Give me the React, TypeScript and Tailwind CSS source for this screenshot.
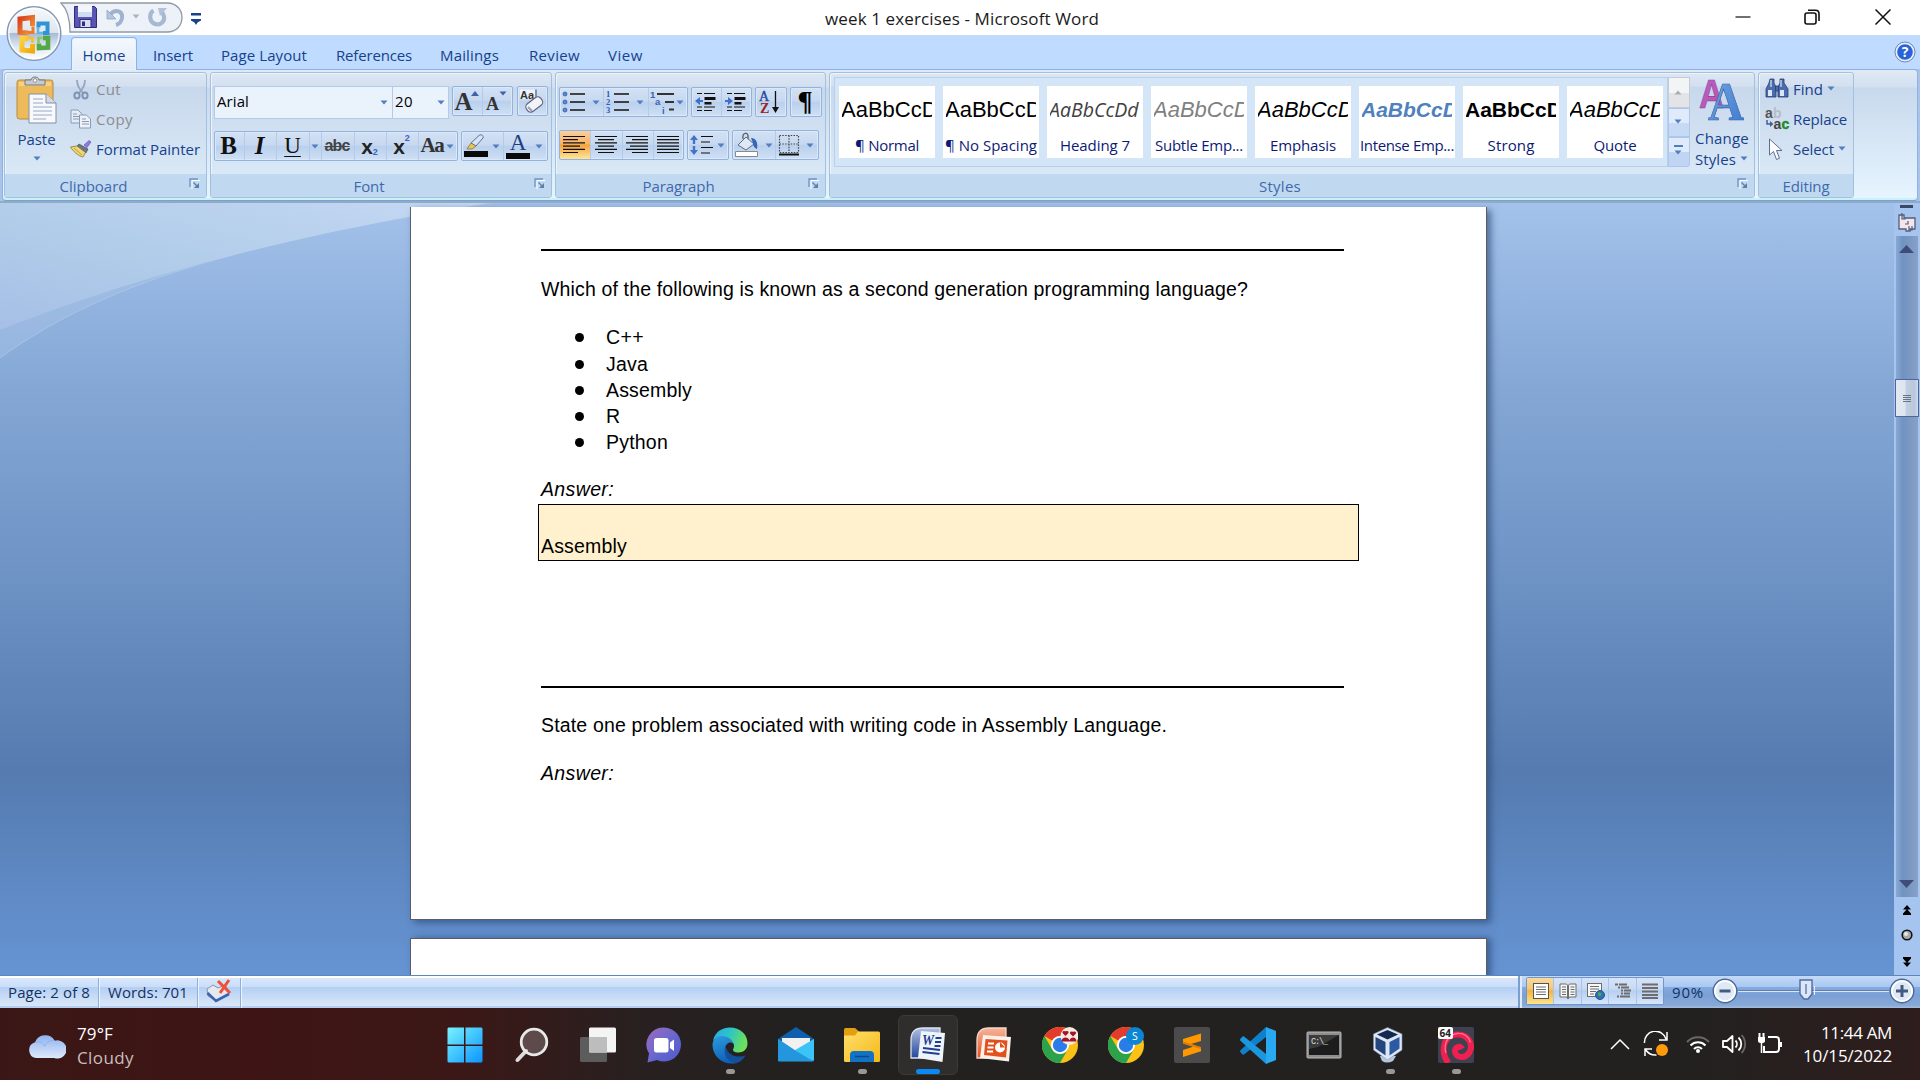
import React, { useLayoutEffect, useRef, useState } from "react";

/** Single-line text tracked so that it fills a given width. */
function Fit({ w, text, className = "" }: { w: number; text: string; className?: string }) {
  const ref = useRef<HTMLSpanElement>(null);
  const [tracking, setTracking] = useState(0);
  useLayoutEffect(() => {
    if (ref.current) setTracking((w - ref.current.getBoundingClientRect().width) / text.length);
  }, []);
  return (
    <span ref={ref} className={"inline-block w-max shrink-0 whitespace-pre " + className} style={{ letterSpacing: tracking }}>
      {text}
    </span>
  );
}

function Caret({ className = "", color = "#4f7fbf" }: { className?: string; color?: string }) {
  return (
    <svg viewBox="0 0 8 5" className={"h-[5px] w-[8px] shrink-0 " + className}>
      <path d="M0.500 0.500h7L4 4.500z" fill={color} />
    </svg>
  );
}

function Launcher() {
  return (
    <svg viewBox="0 0 12 12" className="h-[12px] w-[12px]" fill="none">
      <path d="M2 10V1.500H10" stroke="#fff" strokeWidth="1" transform="translate(1 1)" />
      <path d="M1 9V1h8" stroke="#6f93c4" strokeWidth="1.300" />
      <path d="M4.500 4.500l4 4" stroke="#5b7fae" strokeWidth="1.300" />
      <path d="M10 5v5H5z" fill="#5b7fae" />
    </svg>
  );
}

function Group({ label, labelW, launcher = true, className, children }: { label: string; labelW: number; launcher?: boolean; className: string; children: React.ReactNode }) {
  return (
    <section className={"flex h-[126px] shrink-0 flex-col overflow-hidden rounded-[3px] border border-[#a3c1de] bg-[linear-gradient(180deg,#dde7f3_0px,#d3e0f0_13px,#c8d8ec_14px,#d9e8f6_100px)] shadow-[inset_1px_1px_0_#edf4fb] " + className}>
      <div className="h-[101px] shrink-0">{children}</div>
      <div className="flex h-[23px] items-center bg-[#c1d8f1]">
        <div className={"flex-1 pt-[2px] text-center text-[15px] leading-[23px] text-[#3e6aaa] " + (launcher ? "pr-[7px]" : "")}>
          <Fit w={labelW} text={label} />
        </div>
        {launcher && (
          <div className="-mt-[3px] mr-[5px]">
            <Launcher />
          </div>
        )}
      </div>
    </section>
  );
}

function Cluster({ className, children }: { className: string; children: React.ReactNode }) {
  return (
    <div className={"flex h-[30px] shrink-0 divide-x divide-[#b3cbea] rounded-[2px] border border-[#92b3df] bg-[linear-gradient(180deg,#d3e1f3_0%,#c6d8f0_48%,#b9cfec_50%,#cfe0f5_100%)] shadow-[inset_0_0_0_1px_#dbe8f7] " + className}>
      {children}
    </div>
  );
}

function Cell({ className, children }: { className: string; children: React.ReactNode }) {
  return <div className={"flex h-full shrink-0 items-center justify-center pr-[2px] " + className}>{children}</div>;
}

/* ---------- Title bar icons ---------- */

function OfficeOrb() {
  return (
    <svg viewBox="0 0 56 57" className="h-[57px] w-[56px]">
      <defs>
        <linearGradient id="orb" x1="0" y1="0" x2="0" y2="1">
          <stop offset="0" stopColor="#f6f9fc" />
          <stop offset="0.480" stopColor="#dfe6ef" />
          <stop offset="0.500" stopColor="#a9bcd6" />
          <stop offset="0.750" stopColor="#dfe9f5" />
          <stop offset="1" stopColor="#ffffff" />
        </linearGradient>
        <linearGradient id="orbO" x1="0" y1="0" x2="1" y2="1"><stop offset="0" stopColor="#d8401c" /><stop offset="1" stopColor="#f79a3c" /></linearGradient>
        <linearGradient id="orbY" x1="0" y1="0" x2="1" y2="1"><stop offset="0" stopColor="#fbd23c" /><stop offset="1" stopColor="#f2a90c" /></linearGradient>
      </defs>
      <circle cx="28" cy="28.500" r="26.800" fill="url(#orb)" stroke="#8797b1" strokeWidth="1.400" />
      <circle cx="28" cy="28.500" r="25.200" fill="none" stroke="#fff" strokeOpacity="0.800" strokeWidth="1.400" />
      <g fill="none">
        <path d="M26.500 21v-8.500l-12.500 1.500v13.500l8.500 .5" stroke="url(#orbO)" strokeWidth="5" />
        <path d="M22 27.500h5v-6" stroke="#ef7a2a" strokeWidth="3" />
        <path d="M32.500 22.500v-4h9v9.500h-4.500" stroke="#2f93d6" strokeWidth="4" />
        <path d="M32 22v6h5" stroke="#62b5e8" strokeWidth="2.600" />
        <path d="M22 33.500h-6v11.500l10.500 1v-7" stroke="url(#orbY)" strokeWidth="5" />
        <path d="M22 33h4.500v5" stroke="#f7bd2b" strokeWidth="2.600" />
        <path d="M33 38.500v4.500l9-.5v-9.500h-5" stroke="#54a944" strokeWidth="4.600" />
        <path d="M32.500 38v-5h4" stroke="#8cc95c" strokeWidth="2.600" />
      </g>
    </svg>
  );
}

function QuickAccess() {
  return (
    <div className="relative -ml-[2px] h-[31px] w-[124px]">
      <svg viewBox="0 0 124 31" className="absolute inset-0 h-full w-full" fill="none">
        <path d="M1 1H107C127 1 127 30 107 30H10C10 18 8 8 1 1Z" fill="#edf2f8" stroke="#9199a5" strokeWidth="1.300" />
      </svg>
      <div className="relative flex h-full items-center pb-[2px] pl-[14px]">
        <svg viewBox="0 0 23 23" className="h-[23px] w-[23px]">
          <path d="M.500 1.500h20l2 2v19H.500z" fill="#5a55b4" stroke="#2f2c7c" />
          <path d="M4 1h14v11H4z" fill="#f3f7fd" />
          <path d="M4 7h14v5H4z" fill="#cfdcf2" />
          <path d="M6 14.500h11v8H6z" fill="#d9def0" stroke="#2f2c7c" />
          <path d="M8 16.500h3v4.500H8z" fill="#302c80" />
        </svg>
        <svg viewBox="0 0 20 20" className="ml-[9px] h-[20px] w-[20px]" fill="none">
          <path d="M4 8C8 2 17 3 16 11c-.5 3-3 6-6 7" stroke="#9fb3d0" strokeWidth="4" />
          <path d="M1 3v9h9z" fill="#b4c5dd" stroke="#8fa6c8" strokeWidth=".8" />
        </svg>
        <Caret className="ml-[6px]" color="#b0b4ba" />
        <svg viewBox="0 0 20 20" className="ml-[8px] h-[20px] w-[20px]" fill="none">
          <path d="M5.500 3.500C1 6 1 14 6 16.500c5 2.500 11-1 10-7-.3-2-1-3-2-4" stroke="#a6b9d3" strokeWidth="4.200" />
          <path d="M10 1h9l-7 8z" fill="#b0c1da" />
        </svg>
      </div>
    </div>
  );
}

/* ---------- Ribbon icons ---------- */

const PasteIcon = () => (
  <svg viewBox="0 0 42 48" className="h-[48px] w-[42px]">
    <rect x="1" y="4" width="36" height="39" rx="2.500" fill="#eebb5c" stroke="#b58a3c" />
    <rect x="3" y="6" width="32" height="4" fill="#f6d084" />
    <path d="M9 4h6c0-4 8-4 8 0h6v5H9z" fill="#c6cbd2" stroke="#75797f" />
    <circle cx="19" cy="4.500" r="1.800" fill="#fff" stroke="#666" strokeWidth=".6" />
    <path d="M13 18h17l10 9v20H13z" fill="#f7f9fc" stroke="#8390a6" />
    <path d="M30 18v9h10" fill="#d3dae6" stroke="#8390a6" />
    <path d="M17 23h10M17 27h10M17 31h19M17 35h19M17 39h19M17 43h13" stroke="#b9c4d6" strokeWidth="1.500" />
  </svg>
);
const CutIcon = () => (
  <svg viewBox="0 0 16 21" className="h-[21px] w-[16px]" fill="none">
    <path d="M4 1c0 5 2 9 6 13M12 1c0 5-2 9-6 13" stroke="#96a6bf" strokeWidth="1.800" />
    <ellipse cx="4" cy="16.500" rx="2.600" ry="3" stroke="#7f93b4" strokeWidth="2" />
    <ellipse cx="12" cy="16.500" rx="2.600" ry="3" stroke="#7f93b4" strokeWidth="2" />
  </svg>
);
const CopyIcon = () => (
  <svg viewBox="0 0 22 20" className="h-[20px] w-[22px]" stroke="#8a9ab5">
    <path d="M1 1h7l4 4v9H1z" fill="#e6ecf5" />
    <path d="M3 5h4M3 7.500h7M3 10h7" />
    <path d="M9.500 6h7l4 4v9h-11z" fill="#eef2f8" />
    <path d="M12 10h4M12 12.500h7M12 15h7" />
  </svg>
);
const PainterIcon = () => (
  <svg viewBox="0 0 22 18" className="h-[18px] w-[22px]">
    <path d="M14 5l5-4.500 2 1.500-4 5.500z" fill="#8e7ae0" stroke="#5a4db0" strokeWidth=".6" />
    <path d="M9 4l9 5-2 4-9-7z" fill="#6b7686" stroke="#39414f" strokeWidth=".6" />
    <path d="M7 6l8.500 6.500L13 17C8 16 3 11 .500 7z" fill="#edd778" stroke="#8c7630" strokeWidth=".8" />
    <path d="M4 8l8 7" stroke="#b99c43" />
  </svg>
);
const EraserIcon = () => (
  <svg viewBox="0 0 26 26" className="h-[26px] w-[26px]">
    <path d="M1 1.500h15V11H1z" fill="#eef2fa" />
    <text x="1" y="10.500" fontSize="11" fontWeight="700" fontFamily="Liberation Sans" fill="#333">Aa</text>
    <path d="M17 1.500v10" stroke="#444" />
    <rect x="6.500" y="12" width="18" height="9.500" rx="4" transform="rotate(-38 15 17)" fill="#f2f3f8" stroke="#5f6780" strokeWidth="1.200" />
    <path d="M9 19l4 4" stroke="#9aa2bb" strokeWidth="2" />
  </svg>
);

const Lines = ({ rows }: { rows: [number, number][] }) => (
  <svg viewBox="0 0 24 20" className="h-[20px] w-[24px]" stroke="#111" strokeWidth="1.200">
    {rows.map(([a, b], i) => <path key={i} d={`M${a} ${1.500 + i * 3.200}H${b}`} />)}
  </svg>
);

const ListIcon = ({ numbered = false }: { numbered?: boolean }) => (
  <svg viewBox="0 0 24 24" className="h-[24px] w-[24px]">
    {[4, 12, 20].map((y, i) => (
      <g key={y}>
        {numbered ? (
          <text x="0" y={y + 3} fontSize="8.500" fontWeight="700" fontFamily="Liberation Serif" fill="#2f58b8">{i + 1}</text>
        ) : (
          <circle cx="3" cy={y} r="2" fill="#5b87d6" stroke="#2a55a8" strokeWidth=".7" />
        )}
        <path d={`M8 ${y}h15`} stroke="#111" strokeWidth="1.300" />
      </g>
    ))}
  </svg>
);

const MultiIcon = () => (
  <svg viewBox="0 0 26 26" className="h-[26px] w-[26px]" fontFamily="Liberation Sans" fontWeight="700" fontSize="9.500">
    <text x="0" y="9" fill="#3d62b3">1</text>
    <text x="5" y="16" fill="#3d62b3">a</text>
    <text x="12" y="25" fill="#3d62b3">i</text>
    <path d="M7 5h17M15 13h9M19 20.500h5" stroke="#333" strokeWidth="2" />
  </svg>
);

const IndentIcon = ({ flip = false }: { flip?: boolean }) => (
  <svg viewBox="0 0 22 20" className="h-[20px] w-[22px]">
    <path d="M2 1.500h5M9 1.500h11M2 15h5M9 15h11M2 18.500h5M9 18.500h8" stroke="#111" strokeWidth="1.200" />
    <path d="M9.500 5h11v3h-11zM9.500 10h7v2.500h-7z" fill="#111" />
    {flip ? <path d="M0 8h3V5l5 4-5 4v-3H0z" fill="#3f6fd0" /> : <path d="M8 8H5V5L0 9l5 4v-3h3z" fill="#3f6fd0" />}
  </svg>
);

const SortIcon = () => (
  <svg viewBox="0 0 22 26" className="h-[26px] w-[22px]" fontFamily="Liberation Serif" fontWeight="700">
    <text x="0" y="11.500" fontSize="14" fontWeight="400" fill="#2a4aa0" stroke="#2a4aa0" strokeWidth=".4">A</text>
    <text x="1" y="24" fontSize="14" fill="#9c2222">Z</text>
    <path d="M16.500 2v20" stroke="#111" strokeWidth="1.300" />
    <path d="M13 18h7l-3.500 6z" fill="#111" />
  </svg>
);

const SpacingIcon = () => (
  <svg viewBox="0 0 24 22" className="h-[22px] w-[24px]">
    <path d="M11 2.500h12M11 8h9M11 13.500h12M11 19h9" stroke="#111" strokeWidth="1.200" />
    <path d="M4 1l4 5H5.200v4H2.800V6H0zM4 21l4-5H5.200v-4H2.800v4H0z" fill="#4273c4" />
  </svg>
);

const BucketIcon = () => (
  <svg viewBox="0 0 26 26" className="h-[26px] w-[26px]">
    <path d="M9 7C8 0 14 0 14 4v7" fill="none" stroke="#666" strokeWidth="1.400" />
    <path d="M4 13l8-8 8 7-8 6z" fill="#dfe8f4" stroke="#5a6b88" />
    <path d="M17 6c6 0 7 6 6 11-3-1-4-4-4-6z" fill="#3566b8" />
    <path d="M1.500 19.500h22v5h-22z" fill="#fff" stroke="#8a8a8a" />
  </svg>
);

const BorderIcon = () => (
  <svg viewBox="0 0 22 22" className="h-[22px] w-[22px]" fill="none">
    <path d="M1.500 1.500h19v17h-19zM11 1.500v17M1.500 10h19" stroke="#444" strokeDasharray="1.500 1.300" strokeWidth="1.200" />
    <path d="M1 20.500h20" stroke="#111" strokeWidth="2" />
  </svg>
);

const PenIcon = () => (
  <svg viewBox="0 0 24 24" className="h-[24px] w-[24px]">
    <path d="M7 9L15 1.500c2-1.500 5 0 4 2.500l-7 8z" fill="#d8e4f5" stroke="#5c7099" />
    <path d="M7 9l5 3-4 3H3z" fill="#e6c65a" stroke="#7b6a32" strokeWidth=".7" />
    <path d="M0 17h24v6H0z" fill="#0a0a0a" />
  </svg>
);

const ChangeStylesIcon = () => (
  <svg viewBox="0 0 46 44" className="h-[44px] w-[46px]">
    <defs>
      <linearGradient id="csA" x1="0" y1="0" x2="1" y2="1"><stop offset="0" stopColor="#b565d0" /><stop offset="1" stopColor="#c04c9c" /></linearGradient>
      <linearGradient id="csB" x1="0" y1="0" x2="1" y2="1"><stop offset="0" stopColor="#78a8e0" /><stop offset="1" stopColor="#3d78d0" /></linearGradient>
    </defs>
    <text x="0" y="31" fontSize="40" fontFamily="Liberation Sans" fontWeight="700" fill="url(#csA)" stroke="#83419b" strokeWidth=".6" textLength="25" lengthAdjust="spacingAndGlyphs">A</text>
    <text x="9" y="43" fontSize="54" fontFamily="Liberation Serif" fontWeight="700" fill="url(#csB)" stroke="#3b66a8" strokeWidth=".7" textLength="36" lengthAdjust="spacingAndGlyphs">A</text>
  </svg>
);

const FindIcon = () => (
  <svg viewBox="0 0 24 20" className="h-[20px] w-[24px]">
    <g fill="#4a6cae" stroke="#263d6f" strokeWidth=".8">
      <path d="M5 1h4v4l2 4v10H1v-8l3-6z" />
      <path d="M15 1h4v4l4 6v8H13V9l2-4z" />
      <path d="M10.500 8h3v5h-3z" />
    </g>
    <path d="M3 12h4v6H3zM15 12h4v6h-4z" fill="#dbe6f8" />
    <path d="M6 2v7M16 2v7" stroke="#dbe6f8" strokeWidth="1.200" />
  </svg>
);

const ReplaceIcon = () => (
  <svg viewBox="0 0 26 24" className="h-[24px] w-[26px]" fontFamily="Liberation Sans" fontWeight="700" fontSize="14">
    <text x="0" y="11" fill="#555">a</text>
    <text x="8" y="11" fill="#b8bcc4">b</text>
    <text x="8.500" y="22" fill="#444">a</text>
    <text x="16.500" y="22" fill="#1f8e28" stroke="#1f8e28" strokeWidth=".5">c</text>
    <path d="M2 13v4h4" fill="none" stroke="#3f5f9e" strokeWidth="1.500" />
    <path d="M5 14l3.500 3L5 20z" fill="#3f5f9e" />
  </svg>
);

const SelectIcon = () => (
  <svg viewBox="0 0 16 23" className="h-[23px] w-[16px]">
    <path d="M1.500 1v16l4-3.500 3 8 3-1.200-3-7.800h5.500z" fill="#fdfdff" stroke="#5f6f8f" />
  </svg>
);

/* ---------- Ribbon ---------- */

const styleItems: { name: string; w: number; cls: string }[] = [
  { name: "¶ Normal", w: 64, cls: "text-black" },
  { name: "¶ No Spacing", w: 92, cls: "text-black" },
  { name: "Heading 7", w: 70, cls: "italic text-[#404040] font-['Open_Sans'] text-[19.5px]" },
  { name: "Subtle Emp...", w: 88, cls: "italic text-[#808080]" },
  { name: "Emphasis", w: 66, cls: "italic text-black" },
  { name: "Intense Emp...", w: 94, cls: "italic font-bold text-[#4f81bd] text-[21px]" },
  { name: "Strong", w: 47, cls: "font-bold text-black text-[21px]" },
  { name: "Quote", w: 43, cls: "italic text-black" },
];

function Ribbon() {
  return (
    <div className="h-[134px] shrink-0 bg-[#a9c4e8]">
      <div className="mx-[2px] flex h-[132px] gap-[3px] rounded-[4px] border border-[#8db2e3] border-b-[#7ba3c9] bg-[linear-gradient(180deg,#e0eaf5_0px,#d3e0f0_17px,#c8d9ed_18px,#e6f5ff_129px)] pt-[2px] pl-[1px] shadow-[inset_0_-2px_0_#c9f1f8]">
        <Group label="Clipboard" labelW={68} className="w-[203px]">
          <div className="flex h-full">
            <div className="flex w-[62px] flex-col items-center pt-[3px] pl-[1px] text-[15px] text-[#15428b]">
              <PasteIcon />
              <Fit w={38} text="Paste" className="mt-[5px] leading-[20px]" />
              <Caret className="mt-[7px]" />
            </div>
            <div className="flex flex-col pt-[1px] pl-[2px] text-[15px] leading-[30px] text-[#8d8d8d]">
              <div className="flex h-[30px] items-center"><span className="flex w-[27px] justify-center pr-[4px]"><CutIcon /></span><Fit w={25} text="Cut" /></div>
              <div className="flex h-[30px] items-center"><span className="flex w-[27px] justify-center pr-[4px]"><CopyIcon /></span><Fit w={37} text="Copy" /></div>
              <div className="flex h-[30px] items-center text-[#15428b]"><span className="flex w-[27px] justify-center pr-[3px]"><PainterIcon /></span><Fit w={104} text="Format Painter" /></div>
            </div>
          </div>
        </Group>

        <Group label="Font" labelW={31} className="w-[342px]">
          <div className="flex pt-[13px] pl-[3px]">
            <div className="flex h-[33px] w-[179px] items-center justify-between border border-[#b3cbea] bg-[#eaf2fb] pr-[4px] pb-[2px] pl-[2px] text-[15px] text-black">
              <Fit w={32} text="Arial" /><Caret className="mt-[2px]" />
            </div>
            <div className="flex h-[33px] w-[56px] items-center justify-between border border-l-0 border-[#b3cbea] bg-[#eaf2fb] pr-[3px] pb-[2px] pl-[2px] text-[15px] text-black">
              <Fit w={18} text="20" /><Caret className="mt-[2px]" />
            </div>
            <Cluster className="ml-[3px] w-[61px] font-['Liberation_Serif'] font-bold text-[#333]">
              <Cell className="w-[30px]"><span className="text-[25px] leading-none">A</span><svg viewBox="0 0 8 5" className="-ml-[2px] mb-[16px] h-[5px] w-[8px]"><path d="M0 5h8L4 0z" fill="#3c63a8" /></svg></Cell>
              <Cell className="w-[29px]"><span className="mt-[5px] text-[18px] leading-none">A</span><Caret className="mb-[15px]" color="#3c63a8" /></Cell>
            </Cluster>
            <Cluster className="ml-[4px] w-[31px]"><Cell className="w-[29px]"><EraserIcon /></Cell></Cluster>
          </div>
          <div className="flex pt-[12px] pl-[3px] font-['Liberation_Serif'] text-[#111]">
            <Cluster className="w-[244px]">
              <Cell className="w-[30px] text-[25px] font-bold">B</Cell>
              <Cell className="w-[32px] text-[25px] font-bold italic">I</Cell>
              <Cell className="w-[33px] pl-[1px] text-[23px] underline decoration-1 underline-offset-[3px]">U</Cell>
              <Cell className="w-[12px]"><Caret /></Cell>
              <Cell className="w-[33px] font-['Liberation_Sans'] text-[16px] font-bold text-[#444] line-through"><Fit w={25} text="abc" /></Cell>
              <Cell className="w-[32px] font-['Liberation_Sans'] text-[21px] font-bold text-[#222]"><span className="leading-none">x</span><span className="mt-[14px] text-[9px] text-[#3d62c0]">2</span></Cell>
              <Cell className="w-[32px] font-['Liberation_Sans'] text-[21px] font-bold text-[#222]"><span className="leading-none">x</span><span className="mb-[14px] text-[9px] text-[#3d62c0]">2</span></Cell>
              <Cell className="w-[38px] gap-[2px] text-[21px] font-bold text-[#333]"><Fit w={23} text="Aa" /><Caret /></Cell>
            </Cluster>
            <Cluster className="ml-[3px] w-[87px]">
              <Cell className="w-[42px] gap-[4px]"><PenIcon /><Caret /></Cell>
              <Cell className="w-[43px] gap-[5px]">
                <span className="flex flex-col items-center"><span className="h-[19px] text-[23px] leading-[18px] text-[#1c3f86]">A</span><span className="h-[6px] w-[24px] bg-[#0a0a0a]" /></span>
                <Caret />
              </Cell>
            </Cluster>
          </div>
        </Group>

        <Group label="Paragraph" labelW={72} className="w-[271px]">
          <div className="flex gap-[3px] pt-[14px] pl-[3px]">
            <Cluster className="w-[129px]">
              <Cell className="w-[44px] gap-[6px]"><ListIcon /><Caret /></Cell>
              <Cell className="w-[45px] gap-[6px]"><ListIcon numbered /><Caret /></Cell>
              <Cell className="w-[38px]"><MultiIcon /><Caret /></Cell>
            </Cluster>
            <Cluster className="w-[61px]">
              <Cell className="w-[30px]"><IndentIcon /></Cell>
              <Cell className="w-[29px]"><IndentIcon flip /></Cell>
            </Cluster>
            <Cluster className="w-[32px]"><Cell className="w-[30px]"><SortIcon /></Cell></Cluster>
            <Cluster className="w-[32px]"><Cell className="w-[30px] pb-[2px] font-['Liberation_Serif'] text-[28px] leading-none font-bold text-black">¶</Cell></Cluster>
          </div>
          <div className="flex gap-[3px] pt-[13px] pl-[3px]">
            <Cluster className="w-[125px]">
              <Cell className="w-[31px] rounded-l-[2px] bg-[linear-gradient(180deg,#f9d0a0_0%,#f8b366_45%,#f6a23d_50%,#fde79a_100%)]"><Lines rows={[[1, 23], [1, 16], [1, 23], [1, 18], [1, 23], [1, 16]]} /></Cell>
              <Cell className="w-[32px]"><Lines rows={[[1, 23], [4, 20], [1, 23], [4, 20], [1, 23], [4, 20]]} /></Cell>
              <Cell className="w-[31px]"><Lines rows={[[1, 23], [7, 23], [1, 23], [5, 23], [1, 23], [7, 23]]} /></Cell>
              <Cell className="w-[29px]"><Lines rows={[[1, 23], [1, 23], [1, 23], [1, 23], [1, 23], [1, 23]]} /></Cell>
            </Cluster>
            <Cluster className="w-[42px]"><Cell className="w-[40px] gap-[3px]"><SpacingIcon /><Caret /></Cell></Cluster>
            <Cluster className="w-[87px]">
              <Cell className="w-[43px] gap-[5px]"><BucketIcon /><Caret /></Cell>
              <Cell className="w-[42px] gap-[6px]"><BorderIcon /><Caret /></Cell>
            </Cluster>
          </div>
        </Group>

        <Group label="Styles" labelW={42} className="w-[926px]">
          <div className="flex pt-[4px] pl-[4px]">
            <div className="flex h-[90px] w-[834px] gap-[8px] border border-[#b9d0ed] bg-[#d5e5f8] pt-[8px] pl-[4px]">
              {styleItems.map((s) => (
                <div key={s.name} className="h-[72px] w-[96px] shrink-0 bg-white">
                  <div className="mx-[3px] h-[48px] w-[90px] overflow-hidden pt-[9px] font-['Liberation_Sans'] text-[22px] leading-[29px] whitespace-nowrap">
                    <span className={"-ml-px " + s.cls}>AaBbCcDd</span>
                  </div>
                  <div className="-mt-[2px] flex justify-center text-[15px] leading-[26px] text-[#0c1a75]"><Fit w={s.w} text={s.name} /></div>
                </div>
              ))}
            </div>
            <div className="flex h-[90px] w-[22px] flex-col">
              <div className="flex h-[31px] items-center justify-center border border-[#c3cbd6] bg-[linear-gradient(180deg,#f3f4f5_50%,#e2e4e7_51%)] pr-[2px]"><svg viewBox="0 0 8 5" className="h-[5px] w-[8px]"><path d="M0.500 4.500h7L4 0.500z" fill="#a9adb3" /></svg></div>
              <div className="flex h-[29px] items-center justify-center border border-[#adc7ea] bg-[linear-gradient(180deg,#dfeafa_50%,#c7daf5_51%)] pr-[2px] pb-[2px]"><Caret /></div>
              <div className="flex h-[30px] flex-col items-center justify-center gap-[3px] rounded-br-[3px] border border-[#adc7ea] bg-[linear-gradient(180deg,#dfeafa_50%,#c0d5f3_51%)] pr-[2px] pb-[4px]"><span className="h-[1.500px] w-[9px] bg-[#4f7fbf]" /><Caret /></div>
            </div>
            <div className="ml-[5px] flex flex-col items-start text-[15px] leading-[21px] text-[#15428b]">
              <div className="pl-[4px]"><ChangeStylesIcon /></div>
              <Fit w={54} text="Change" className="mt-[7px]" />
              <div className="flex items-center gap-[4px]"><Fit w={41} text="Styles" /><Caret className="-mt-[3px]" /></div>
            </div>
          </div>
        </Group>

        <Group label="Editing" labelW={47} launcher={false} className="w-[96px]">
          <div className="flex flex-col pt-[1px] pl-[6px] text-[15px] leading-[30px] text-[#15428b]">
            <div className="flex h-[30px] items-center"><span className="flex w-[28px]"><span className="-mt-[2px]"><FindIcon /></span></span><Fit w={30} text="Find" /><Caret className="-mt-[2px] ml-[4px]" /></div>
            <div className="flex h-[30px] items-center"><span className="flex w-[28px]"><ReplaceIcon /></span><Fit w={54} text="Replace" /></div>
            <div className="flex h-[30px] items-center"><span className="flex w-[28px] pl-[3px]"><SelectIcon /></span><Fit w={41} text="Select" /><Caret className="-mt-[2px] ml-[4px]" /></div>
          </div>
        </Group>
      </div>
      <div className="h-[2px] bg-[#92a9c9]" />
    </div>
  );
}

/* ---------- Document ---------- */

function DocLine({ text, w, className = "" }: { text: string; w: number; className?: string }) {
  return <div className={"flex h-[26px] leading-[26px] " + className}><Fit w={w} text={text} /></div>;
}

const languages: [string, number][] = [["C++", 38], ["Java", 42], ["Assembly", 86], ["R", 14], ["Python", 62]];

function DocumentArea() {
  return (
    <div className="relative flex h-[772px] shrink-0 overflow-hidden bg-[linear-gradient(180deg,#a3c2eb_0%,#84a7d5_24%,#6d92c4_49%,#557bb0_73.500%,#6694d3_100%)]">
      <svg viewBox="0 0 520 160" className="absolute top-0 left-0 h-[160px] w-[520px]">
        <defs>
          <linearGradient id="swoosh" x1="0" y1="1" x2="1" y2="0">
            <stop offset="0" stopColor="#a5bfe6" />
            <stop offset="0.400" stopColor="#b0cce9" />
            <stop offset="1" stopColor="#c6d9f4" />
          </linearGradient>
        </defs>
        <path d="M0 155C110 75 260 35 520 -4H0z" fill="#a8c4e6" fillOpacity=".45" />
        <path d="M0 155C110 75 260 35 520 -4" fill="none" stroke="#b4cdec" strokeOpacity=".6" />
        <path d="M0 127C130 76 290 30 520 -5H0z" fill="url(#swoosh)" />
      </svg>
      <main className="relative flex flex-1 flex-col pt-[4px] pl-[410px] font-['Liberation_Sans'] text-[19.5px] text-black">
        <div className="h-[713px] w-[1077px] shrink-0 border border-t-0 border-[#5a5d66] bg-white shadow-[4px_3px_7px_#2c4a78b0]">
          <div className="ml-[130px] w-[803px] pt-[42px]">
            <div className="h-[2px] bg-black" />
            <DocLine w={707} text="Which of the following is known as a second generation programming language?" className="mt-[25px]" />
            <ul className="mt-[22px]">
              {languages.map(([t, w], i) => (
                <li key={t} className={"flex pl-[34px] leading-[26px] " + (i === 0 ? "h-[27px]" : "h-[26px]")}>
                  <span className="mt-[9px] mr-[22px] h-[9px] w-[9px] rounded-full bg-black" />
                  <Fit w={w} text={t} />
                </li>
              ))}
            </ul>
            <DocLine w={73} text="Answer:" className="mt-[21px] italic" />
            <div className="mt-[2px] -ml-[3px] h-[57px] w-[821px] border border-black bg-[#fff1ce] pt-[28px] pl-[2px]">
              <DocLine w={86} text="Assembly" />
            </div>
            <div className="mt-[125px] h-[2px] bg-black" />
            <DocLine w={626} text="State one problem associated with writing code in Assembly Language." className="mt-[24px]" />
            <DocLine w={73} text="Answer:" className="mt-[22px] italic" />
          </div>
        </div>
        <div className="mt-[18px] h-[60px] w-[1077px] shrink-0 border border-[#5a5d66] bg-white shadow-[4px_0_7px_#2c4a78b0]" />
      </main>
      <aside className="relative flex w-[26px] flex-col items-center bg-[#a6c4f0] pr-px">
        <div className="mt-[2px] h-[3px] w-[13px] bg-[#3c4966]" />
        <svg viewBox="0 0 20 20" className="mt-[4px] h-[20px] w-[20px]">
          <path d="M2 3h5v3h11v11H13v2h-4v-2H2z" fill="#f1e6ee" stroke="#555e75" strokeWidth="1.300" />
          <path d="M5 1v6h4M8 12h3v-3M12 14v4h3v-4" fill="none" stroke="#555e75" strokeWidth="1.200" />
        </svg>
        <div className="mt-[4px] flex h-[661px] w-[22px] flex-col items-center bg-[linear-gradient(90deg,#89a9d4_0%,#7193c1_30%,#7d9ac4_70%,#87a2c9_100%)]">
          <svg viewBox="0 0 15 8" className="mt-[9px] h-[8px] w-[15px]"><path d="M0 8h15L7.500 0z" fill="#3d4c78" /></svg>
          <div className="mt-[126px] flex h-[38px] w-[24px] shrink-0 flex-col items-center justify-center gap-[1px] border border-[#4f689b] bg-[linear-gradient(90deg,#e3e9f2_0%,#dde5ef_42%,#c3cfe1_45%,#b9c7dc_85%,#d3deeb_100%)]">
            {[0, 1, 2, 3].map((i) => <span key={i} className="h-px w-[8px] bg-[#6b7384]" />)}
          </div>
          <svg viewBox="0 0 15 8" className="mt-auto mb-[9px] h-[8px] w-[15px]"><path d="M0 0h15L7.500 8z" fill="#3d4c78" /></svg>
        </div>
        <svg viewBox="0 0 10 10" className="mt-[8px] h-[10px] w-[10px]"><path d="M5 0l4 4.500H1zM5 4l4 4.500H1zM1 8.500h8V10H1z" fill="#000" /></svg>
        <svg viewBox="0 0 12 12" className="mt-[14px] h-[12px] w-[12px]"><circle cx="6" cy="6" r="4.800" fill="#a9a9a9" stroke="#111" strokeWidth="1.600" /><circle cx="5" cy="5" r="2" fill="#e8e8e8" /></svg>
        <svg viewBox="0 0 10 10" className="mt-[16px] h-[10px] w-[10px]"><path d="M1 0h8v1.500H1zM1 1.500h8L5 6zM1 5.500h8L5 10z" fill="#000" /></svg>
      </aside>
    </div>
  );
}

/* ---------- Status bar ---------- */

const Sep = () => <div className="h-full w-[2px] border-l border-l-[#8fb0dc] bg-[#eaf3ff]" />;

function ViewIcon({ kind }: { kind: number }) {
  return (
    <svg viewBox="0 0 18 18" className="h-[18px] w-[18px]" fill="none" stroke="#6d6d6d">
      {kind === 0 && <><rect x="1.500" y="1.500" width="15" height="15" fill="#fff" stroke="#555" /><path d="M4 5h10M4 7.500h10M4 10h10M4 12.500h10" /></>}
      {kind === 1 && <><path d="M1 2h6.500L9 4l1.500-2H17v13h-6.500L9 17l-1.500-2H1z" fill="#f5f5f5" /><path d="M9 4v12" strokeWidth="2" /><path d="M3 5h4M3 7.500h4M3 10h4M3 12.500h4M11.500 5h4M11.500 7.500h4M11.500 10h4M11.500 12.500h4" /></>}
      {kind === 2 && <><rect x=".5" y="1.500" width="14" height="13" fill="#f8f8f8" /><path d="M3 4.500h9M3 7h9M3 9.500h6M3 12h4" /><circle cx="13" cy="13" r="4.500" fill="#2e6fb8" stroke="#27578e" /><path d="M11 11c2-1 4 0 3 2s-3 2-3-2" fill="#4fae4f" stroke="none" /></>}
      {kind === 3 && <path d="M1 2.500h3M5 2.500h8M4 5.500h2M7 5.500h8M7 8.500h2M10 8.500h7M7 11.500h2M10 11.500h6M3 14.500h2M6 14.500h10" strokeWidth="1.800" />}
      {kind === 4 && <path d="M1 2.500h16M1 6h16M1 9.500h16M1 13h16M1 16h16" strokeWidth="1.900" />}
    </svg>
  );
}

function ZoomButton({ plus = false }: { plus?: boolean }) {
  return (
    <svg viewBox="0 0 26 26" className="h-[26px] w-[26px] shrink-0">
      <circle cx="13" cy="13" r="11.800" fill="#dfe9f6" stroke="#4b6a9a" strokeWidth="1.400" />
      <circle cx="13" cy="13" r="10" fill="none" stroke="#fff" strokeWidth="1.500" />
      <path d={plus ? "M7 13h12M13 7v12" : "M7.500 13h11"} stroke="#445b80" strokeWidth="3" />
    </svg>
  );
}

function StatusBar() {
  return (
    <footer className="flex h-[33px] shrink-0 border-t border-[#5c86bd] text-[15px] text-[#15428b]">
      <div className="flex flex-1 border-t-2 border-white bg-[linear-gradient(180deg,#d8e6fa_0%,#cadefa_30%,#b3cff4_31%,#cfe0f7_75%,#d9e6f7_92%,#b5cff2_93%)] leading-[29px] text-[#13315f]">
        <div className="w-[98px] pl-[8px]"><Fit w={82} text="Page: 2 of 8" /></div>
        <Sep />
        <div className="w-[97px] pl-[8px]"><Fit w={80} text="Words: 701" /></div>
        <Sep />
        <div className="w-[41px] pt-px pl-[7px]">
          <svg viewBox="0 0 26 24" className="h-[24px] w-[26px]">
            <path d="M1 10l6-4 5 3 7-3 5 8-13 8-9-5z" fill="#e4e8ef" stroke="#8a93a5" />
            <path d="M1.500 14l8.500 8 13-7" fill="none" stroke="#3b63b0" strokeWidth="2.600" />
            <path d="M12 2l12 12M23 1L14 14" stroke="#ef5038" strokeWidth="3" />
          </svg>
        </div>
        <Sep />
      </div>
      <div className="flex h-full w-[402px] items-center border-l-2 border-[#7a9ed0] bg-[linear-gradient(180deg,#c5daf7_0%,#a9c8f2_33%,#83aae2_35%,#7ba0d6_60%,#88a9d6_92%,#a5bedf_100%)] shadow-[inset_2px_0_0_#dfebfb]">
        <div className="mb-[3px] ml-[6px] flex h-[28px] w-[138px] rounded-[2px] border border-[#6f97cf]">
          {[0, 1, 2, 3, 4].map((k) => (
            <div key={k} className={"flex flex-1 items-center justify-center border-r border-[#a9c4ea] pt-px pl-[1px] last:border-r-0 " + (k === 0 ? "bg-[linear-gradient(180deg,#f9d9a0_0%,#f6c974_40%,#f3b340_50%,#fde48c_100%)]" : "bg-[linear-gradient(180deg,#d4e3f8_0%,#c9dbf4_40%,#b7cff0_50%,#d6e6fc_100%)]")}>
              <ViewIcon kind={k} />
            </div>
          ))}
        </div>
        <Fit w={32} text="90%" className="ml-[8px] text-[#13315f]" />
        <div className="ml-[8px] flex items-center pb-[2px]">
          <ZoomButton />
          <div className="relative h-[26px] w-[151px]">
            <div className="absolute top-[12px] h-[2px] w-full border-b border-white/80 bg-[#5d7fb3]" />
            <div className="absolute top-[8px] left-[76px] h-[9px] w-px bg-white/80" />
            <svg viewBox="0 0 14 22" className="absolute top-[1px] left-[61px] h-[22px] w-[14px]">
              <path d="M1 1h12v14l-4 5H5l-4-5z" fill="#dbe7f7" stroke="#4d6da0" strokeWidth="1.400" />
              <path d="M7 5v10" stroke="#6d88b3" strokeWidth="1.600" />
            </svg>
          </div>
          <ZoomButton plus />
        </div>
      </div>
    </footer>
  );
}

/* ---------- Taskbar ---------- */

const WindowsIcon = () => (
  <svg viewBox="0 0 36 36" className="-ml-[2px] h-[36px] w-[36px]">
    <defs><linearGradient id="win" gradientUnits="userSpaceOnUse" x1="0" y1="0" x2="36" y2="36"><stop offset="0" stopColor="#7af3ff" /><stop offset="1" stopColor="#0894ff" /></linearGradient></defs>
    <path d="M1.500.500H17v17H.500V1.500zM18.500.500H34.500l1 1v16h-17zM.500 19H17v16.500H1.500l-1-1zM18.500 19h17v15.500l-1 1h-16z" fill="url(#win)" />
  </svg>
);
const SearchIcon = () => (
  <svg viewBox="0 0 36 36" className="h-[36px] w-[36px]">
    <path d="M12 24l-8.500 9" stroke="#dcdcdc" strokeWidth="4" strokeLinecap="round" />
    <circle cx="20" cy="15" r="12.800" fill="#f5f3f3" fillOpacity=".22" stroke="#e9e9e9" strokeWidth="2.800" />
  </svg>
);
const TaskViewIcon = () => (
  <svg viewBox="0 0 36 36" className="h-[36px] w-[36px]">
    <rect y="10" width="27" height="25" rx="1.500" fill="#5c5c5c" />
    <rect x="9" y=".5" width="27" height="25" rx="1.500" fill="#f4f4f4" />
    <path d="M9 10h18v15.500H10q-1 0-1-1z" fill="#bdbdbd" />
  </svg>
);
const ChatIcon = () => (
  <svg viewBox="0 0 36 36" className="h-[36px] w-[36px]">
    <defs><linearGradient id="chat" x1="0" y1="0" x2="1" y2="1"><stop offset="0" stopColor="#9a6ab8" /><stop offset=".35" stopColor="#7b6ac8" /><stop offset=".6" stopColor="#5f66d0" /><stop offset="1" stopColor="#5457c8" /></linearGradient></defs>
    <path d="M18 .5a17 17 0 1 1-7 32.500L1.500 35.500l1.500-9A17 17 0 0 1 18 .5z" fill="url(#chat)" />
    <rect x="8" y="11" width="14.500" height="14.500" rx="2.500" fill="#fff" />
    <path d="M24 15.500l4-3v11.500l-4-3z" fill="#fff" />
  </svg>
);
const EdgeIcon = () => (
  <svg viewBox="0 0 36 37" className="h-[37px] w-[36px]">
    <defs>
      <linearGradient id="edA" x1="0" y1="0" x2="1" y2=".3"><stop offset="0" stopColor="#28a8e8" /><stop offset=".5" stopColor="#2cc4c8" /><stop offset="1" stopColor="#6be05c" /></linearGradient>
      <linearGradient id="edB" x1="0" y1="0" x2=".3" y2="1"><stop offset="0" stopColor="#2c9be0" /><stop offset="1" stopColor="#0f62b8" /></linearGradient>
    </defs>
    <path d="M1 14C3 4 11 .5 18 .5c10 0 18 7 17.500 16.500-.2 5-4 8.500-9 8.500-4 0-6-1.500-5.500-3 2-3 1-7-2-8.500C12 11 4 10 1 14z" fill="url(#edA)" />
    <path d="M.5 18C.5 13 4 9 10 9c6 0 11 4 11.500 8-3-3-8-1-8.500 5-.5 7 5 13 12 14C12 39 .5 30 .5 18z" fill="url(#edB)" />
    <path d="M13.500 19c-3 8 2 17 11 17 4-1 7-4 9-7.500-8 3-18 0-20-9.500z" fill="#12509c" />
  </svg>
);
const MailIcon = () => (
  <svg viewBox="0 0 36 36" className="h-[36px] w-[36px]">
    <path d="M0 12L18 0l18 12v4H0z" fill="#0f5fae" />
    <path d="M4 11h28v10L18 25 4 21z" fill="#f1f1f1" />
    <path d="M0 12l18 12L36 12v21q0 1.500-1.500 1.500h-33Q0 34.500 0 33z" fill="#2ba0e6" />
    <path d="M0 33.500L18 22.500 36 12v21z" fill="#3cc3f7" />
    <path d="M0 12l18 12 17 10H0z" fill="#2396de" />
  </svg>
);
const FolderIcon = () => (
  <svg viewBox="0 0 36 36" className="h-[36px] w-[36px]">
    <defs><linearGradient id="fold" x1="0" y1="0" x2="1" y2="1"><stop offset="0" stopColor="#ffdf6c" /><stop offset="1" stopColor="#f5b817" /></linearGradient></defs>
    <path d="M0 2.500Q0 1 1.500 1H11l4 3.500v5H0z" fill="#e0a010" />
    <path d="M0 8.500h11l3-4h20.500q1.500 0 1.500 1.500v27.500q0 1.500-1.500 1.500h-33Q0 35 0 33.500z" fill="url(#fold)" />
    <path d="M6 35v-7q0-4 4-4h16q4 0 4 4v7z" fill="#1272c4" />
    <path d="M11 29.500h14" stroke="#0a4a8c" strokeWidth="1.500" />
  </svg>
);
const WordIcon = () => (
  <svg viewBox="0 0 36 36" className="h-[36px] w-[36px]">
    <defs><linearGradient id="wd" x1="0" y1="0" x2="0" y2="1"><stop offset="0" stopColor="#aebfe0" /><stop offset="1" stopColor="#23479c" /></linearGradient></defs>
    <path d="M1 31V13Q1 1 13 1h17v30z" fill="url(#wd)" stroke="#dbe3f2" strokeWidth="1.300" />
    <path d="M11 4l24 2-2.500 29L8 31z" fill="#eff4fa" />
    <text x="12" y="18" fontSize="14" fontWeight="700" fontStyle="italic" fontFamily="Liberation Serif" fill="#1f3f8f" textLength="12" lengthAdjust="spacingAndGlyphs">W</text>
    <path d="M25.500 11h6M25 15h6M24.500 19h6M13 21l17 2M12.500 25l17 2" stroke="#1f3f8f" strokeWidth="2" />
  </svg>
);
const PowerPointIcon = () => (
  <svg viewBox="0 0 36 36" className="h-[36px] w-[36px]">
    <defs><linearGradient id="pp" x1="0" y1="0" x2="0" y2="1"><stop offset="0" stopColor="#f7b49a" /><stop offset="1" stopColor="#e2501e" /></linearGradient></defs>
    <path d="M1 31V13Q1 1 13 1h17v30z" fill="url(#pp)" stroke="#f5d8cc" strokeWidth="1.300" />
    <path d="M7 8l28 2-2 24.500L4 31z" fill="#fbf0ea" />
    <path d="M9.500 12l22 1.500-1.500 17-22-2.500z" fill="#e2501e" />
    <path d="M12 16.500h6M11.500 20.500h6M11 24.500h6" stroke="#fff" strokeWidth="2.200" />
    <circle cx="24" cy="20.500" r="5" fill="#fff" /><path d="M24 20.500V15l5 5.500z" fill="#e2501e" />
  </svg>
);
function ChromeIcon({ badge }: { badge: "people" | "s" }) {
  return (
    <svg viewBox="0 0 36 36" className="h-[36px] w-[36px]">
      <circle cx="18" cy="18" r="18" fill="#fbc116" />
      <path d="M2.400 9A18 18 0 0 1 33.600 9H18a9 9 0 0 0-7.800 4.500z" fill="#e33b2e" />
      <path d="M2.400 9A18 18 0 0 0 18 36l7.800-13.500A9 9 0 0 1 10.200 22.500z" fill="#2ba24c" />
      <circle cx="18" cy="18" r="9" fill="#fff" /><circle cx="18" cy="18" r="7.200" fill="#2a7de9" />
      {badge === "people" ? (
        <g><circle cx="27.500" cy="9" r="9" fill="#f3ecdf" /><g fill="#a5142a"><path d="M23.500 9L20.500 6q-.5-3 3-1.700 3.500-1.300 3 1.700zM31 9.500L28 6.500q-.5-3 3-1.700 3.500-1.300 3 1.700z" /><path d="M19.500 14.500c0-5 7-5 8-1 1-4 7-4 7 1z" /></g></g>
      ) : (
        <g><circle cx="27" cy="9" r="9" fill="#0b86d4" /><text x="27" y="12.800" textAnchor="middle" fontSize="10.500" fontFamily="Open Sans" fill="#fff">S</text></g>
      )}
    </svg>
  );
}
const SublimeIcon = () => (
  <svg viewBox="0 0 36 36" className="h-[36px] w-[36px]">
    <rect width="36" height="36" rx="2" fill="#4b4b4b" />
    <path d="M9 12l18-5.500v7.500l-10 3 10 3.200v4L9 30v-7l10-3.200-10-3.300z" fill="#ff9800" />
    <path d="M9 16.500l18 5.500v-2L17 17l-8-2.500z" fill="#e07c00" />
  </svg>
);
const CodeIcon = () => (
  <svg viewBox="0 0 36 37" className="h-[37px] w-[36px]">
    <path d="M26 0L36 4v29l-10 4z" fill="#29a9f2" />
    <path d="M26 0v10L4 27.500q-1 .5-2-.5l-1.700-2q-.6-1 .4-2z" fill="#0f80cc" />
    <path d="M26 37V27L4 9.500q-1-.5-2 .5L.3 12q-.6 1 .4 2z" fill="#1b97e0" />
  </svg>
);
const CmdIcon = () => (
  <svg viewBox="0 0 36 36" className="h-[36px] w-[36px]">
    <rect x="1" y="5" width="34" height="26" rx="1" fill="#8e8e8e" stroke="#b9b9b9" />
    <rect x="3" y="8" width="30" height="20" fill="#1c1c1c" /><path d="M3 8h30L12 20 3 22z" fill="#3b3b3b" />
    <text x="5" y="16.500" fontSize="8.500" fontFamily="Liberation Mono" fill="#ddd" textLength="17">C:\_</text>
  </svg>
);
const BoxIcon = () => (
  <svg viewBox="0 0 36 36" className="-ml-[4px] h-[36px] w-[36px]">
    <path d="M10 29h16l-3 5q-6 3-11 0z" fill="#b8c6de" />
    <path d="M17.500.500L32 7v16l-14.500 10L3.500 23V7z" fill="#dce6f4" stroke="#7d8fae" strokeWidth=".6" />
    <path d="M17.500 3L28 7.500l-10.500 5L7 7.500z" fill="#12294d" /><path d="M5.500 10l10 5v13.500l-10-7z" fill="#23477d" /><path d="M29.500 10l-10 5v13.500l10-7z" fill="#2b5aa3" />
  </svg>
);
const SwirlIcon = () => (
  <svg viewBox="0 0 36 36" className="h-[36px] w-[36px]">
    <rect width="36" height="36" rx="2" fill="#3d4150" />
    <path d="M10.500 36C2 25 5 8 19 7.500c12-.5 17 11 12 18.500-4 6-14 5-14-2 0-4 5-6 7-2" fill="none" stroke="#ef1f4f" strokeWidth="6" />
    <path d="M8 26C5 17 10 8 19 6.500c8-.5 12 4 13.500 9" fill="none" stroke="#ff7590" strokeWidth="1.300" />
    <rect width="15" height="12" rx="2" fill="#fff" />
    <text x="1.500" y="9.800" fontSize="10" fontWeight="700" fontFamily="Open Sans" fill="#222">64</text>
  </svg>
);

const apps: { icon: React.ReactNode; state?: "open" | "active" }[] = [
  { icon: <WindowsIcon /> }, { icon: <SearchIcon /> }, { icon: <TaskViewIcon /> }, { icon: <ChatIcon /> },
  { icon: <EdgeIcon />, state: "open" }, { icon: <MailIcon /> }, { icon: <FolderIcon />, state: "open" },
  { icon: <WordIcon />, state: "active" }, { icon: <PowerPointIcon /> }, { icon: <ChromeIcon badge="people" /> },
  { icon: <ChromeIcon badge="s" /> }, { icon: <SublimeIcon /> }, { icon: <CodeIcon /> }, { icon: <CmdIcon /> },
  { icon: <BoxIcon />, state: "open" }, { icon: <SwirlIcon />, state: "open" },
];

function Taskbar() {
  return (
    <div className="flex h-[72px] shrink-0 bg-[linear-gradient(90deg,#3a1716_0%,#3e1414_13%,#3b1817_24%,#292020_33%,#232120_40%,#222120_88%,#2e1d1c_100%)] text-[17px] text-white">
      <div className="flex w-[436px] pl-[29px]">
        <svg viewBox="2 0 38 28" className="mt-[24px] h-[27px] w-[37px]">
          <defs><linearGradient id="cloud" x1="0" y1="0" x2="0" y2="1"><stop offset="0" stopColor="#8fb2ee" /><stop offset="1" stopColor="#dfe9fb" /></linearGradient></defs>
          <path d="M9 27a8.500 8.500 0 0 1-1-16.500A11.500 11.500 0 0 1 28.500 9 9.500 9.500 0 1 1 28 27z" fill="url(#cloud)" />
          <path d="M8 11c4-2 9 0 10 4 2-5 7-7 11-6" fill="none" stroke="#7fa4e4" strokeOpacity=".6" />
        </svg>
        <div className="mt-[14px] ml-[11px] flex flex-col items-start leading-[24px]">
          <Fit w={36} text="79°F" />
          <Fit w={57} text="Cloudy" className="text-[#c9bfbf]" />
        </div>
      </div>
      <div className="flex gap-[6px] pt-[7px]">
        {apps.map((a, i) => (
          <div key={i} className={"flex h-[60px] w-[60px] flex-col items-center rounded-[6px] " + (a.state === "active" ? "border border-[#3c3a39] bg-[#302e2d] pt-[10px]" : "pt-[11px]")}>
            <div className="flex h-[38px] items-center">{a.icon}</div>
            {a.state === "open" && <div className="mt-[5px] h-[5px] w-[9px] rounded-full bg-[#9a9897]" />}
            {a.state === "active" && <div className="mt-[5px] h-[5px] w-[24px] rounded-full bg-[#0a8af5]" />}
          </div>
        ))}
      </div>
      <div className="ml-auto flex items-center pr-[28px]">
        <svg viewBox="0 0 20 12" className="h-[12px] w-[20px]" fill="none" stroke="#fff" strokeWidth="1.500"><path d="M1 11L10 2l9 9" /></svg>
        <svg viewBox="0 0 26 26" className="ml-[13px] h-[26px] w-[26px]" fill="none" stroke="#fff" strokeWidth="1.500">
          <path d="M1.500 12A11 11 0 0 1 23 8M24 1v8h-8M2 25v-7h7M2.500 18.500c2 3 6 6 11 5.500" /><circle cx="19" cy="19" r="6" fill="#ff9a0a" stroke="none" />
        </svg>
        <svg viewBox="0 0 24 20" className="ml-[17px] h-[20px] w-[24px]" fill="none" strokeWidth="2">
          <path d="M1 8a15 15 0 0 1 22 0" stroke="#6a6866" /><path d="M4.500 11.500a10.500 10.500 0 0 1 15 0M8 15a5.500 5.500 0 0 1 8 0" stroke="#fff" /><circle cx="12" cy="17" r="2" fill="#fff" />
        </svg>
        <svg viewBox="0 0 26 22" className="ml-[11px] h-[22px] w-[26px]" fill="none" strokeWidth="1.800">
          <path d="M2 8h4l5.500-5v16L6 14H2z" stroke="#fff" strokeLinejoin="round" /><path d="M14.500 7.500a5 5 0 0 1 0 7M17.500 4.500a9 9 0 0 1 0 13" stroke="#fff" /><path d="M20.500 2a13 13 0 0 1 0 18" stroke="#6a6866" />
        </svg>
        <svg viewBox="0 0 26 22" className="ml-[10px] h-[22px] w-[26px]" fill="none" stroke="#fff" strokeWidth="2">
          <path d="M11 4h8q3 0 3 3v9q0 3-3 3H7v-6M24 9v5" /><path d="M1 4h7v4q0 2-3.500 2T1 8z" fill="#fff" stroke="none" /><path d="M2.500 0v4M6.500 0v4" /><path d="M4.500 10v10" strokeWidth="1.500" />
        </svg>
        <div className="flex w-[109px] flex-col items-end leading-[23px]">
          <Fit w={71} text="11:44 AM" />
          <Fit w={89} text="10/15/2022" />
        </div>
      </div>
    </div>
  );
}

const tabs: { name: string; w: number; cls: string }[] = [
  { name: "Insert", w: 40, cls: "w-[68px]" },
  { name: "Page Layout", w: 86, cls: "w-[115px]" },
  { name: "References", w: 76, cls: "w-[104px]" },
  { name: "Mailings", w: 59, cls: "w-[89px]" },
  { name: "Review", w: 51, cls: "w-[79px]" },
  { name: "View", w: 35, cls: "w-[60px]" },
];

export default function App() {
  return (
    <div className="flex h-[1080px] w-[1920px] flex-col overflow-hidden bg-[#bfdbff] font-['Open_Sans',sans-serif]">
      <header className="relative h-[69px] shrink-0">
        <div className="flex h-[35px] bg-white">
          <div className="flex w-[825px] pt-[2px] pl-[62px]">
            <QuickAccess />
            <svg viewBox="0 0 10 12" className="mt-[11px] ml-[7px] h-[12px] w-[10px]"><path d="M0 0h10v2.500H0zM0 6h10v1.500L6.500 9.500 5 12 3.500 9.500 0 7.500z" fill="#15428b" /></svg>
          </div>
          <Fit w={274} text="week 1 exercises - Microsoft Word" className="text-[17px] leading-[37px] text-[#1a1a1a]" />
          <div className="ml-auto flex h-[33px] items-center pr-[29px]">
            <svg viewBox="0 0 16 16" className="h-[16px] w-[16px]" stroke="#111"><path d="M.5 8h15" strokeWidth="1.200" /></svg>
            <svg viewBox="0 0 16 16" className="ml-[53px] h-[16px] w-[16px]" fill="none" stroke="#111" strokeWidth="1.600"><rect x="1" y="4" width="11" height="11" rx="2" /><path d="M4 1.200h7.500q3.500 0 3.500 3.500V12" /></svg>
            <svg viewBox="0 0 16 16" className="ml-[55px] h-[16px] w-[16px]" stroke="#111" strokeWidth="1.500"><path d="M.5.500l15 15M15.500.500l-15 15" /></svg>
          </div>
        </div>
        <nav className="flex h-[34px] pt-[2px] pl-[71px] text-[15px] leading-[36px] text-[#15428b]">
          <div className="relative z-10 -mb-[1px] flex h-[33px] w-[66px] justify-center rounded-t-[4px] border border-b-0 border-[#8db2e3] bg-[linear-gradient(180deg,#f4f8fd,#e1ebf7)] leading-[34px] shadow-[inset_0_0_0_1px_#e4f3ff]"><Fit w={43} text="Home" /></div>
          <div className="flex pl-[16px]">
            {tabs.map((t) => <div key={t.name} className={t.cls}><Fit w={t.w} text={t.name} /></div>)}
          </div>
          <svg viewBox="0 0 22 22" className="mt-[4px] mr-[4px] ml-auto h-[22px] w-[22px]">
            <circle cx="11" cy="11" r="10" fill="#e6effb" stroke="#6b88b8" /><circle cx="11" cy="11" r="7.800" fill="#2a62d8" />
            <text x="11" y="16" textAnchor="middle" fontSize="14" fontWeight="700" fontFamily="Open Sans" fill="#fff">?</text>
          </svg>
        </nav>
        <div className="absolute top-[5px] left-[6px]"><OfficeOrb /></div>
      </header>
      <Ribbon />
      <DocumentArea />
      <StatusBar />
      <Taskbar />
    </div>
  );
}
